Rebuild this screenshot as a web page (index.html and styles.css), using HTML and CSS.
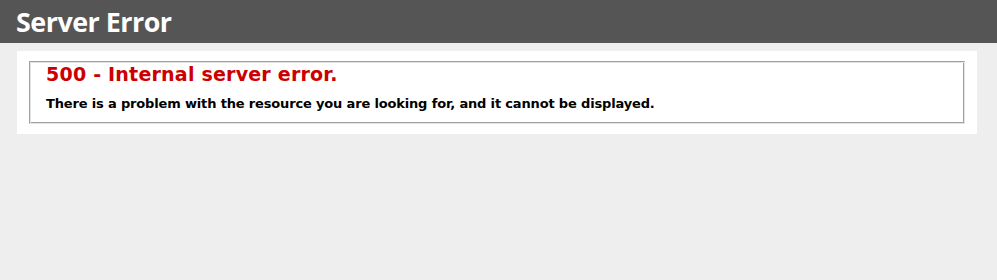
FILE: index.html
```html
<!DOCTYPE html>
<html>
<head>
<meta charset="utf-8">
<title>500 - Internal server error.</title>
<link rel="stylesheet" href="styles.css">
</head>
<body>
<div class="header"><h1>Server Error</h1></div>
<div class="content">
  <div class="content-container">
    <fieldset>
      <h2>500 - Internal server error.</h2>
      <h3>There is a problem with the resource you are looking for, and it cannot be displayed.</h3>
    </fieldset>
  </div>
</div>
</body>
</html>
```

FILE: styles.css
```css
body {
  margin: 0;
  font-size: 11.2px;
  font-family: "DejaVu Sans", Verdana, sans-serif;
  background: #eeeeee;
}
.header {
  padding: 6px 16px;
  background-color: #555555;
  font-family: "Open Sans", sans-serif;
  color: #fff;
}
h1 {
  font-size: 26.88px;
  line-height: 31px;
  letter-spacing: -0.5px;
  margin: 0;
  color: #fff;
  font-weight: 700;
}
.content {
  padding: 0 20px 0 17px;
}
.content-container {
  background: #fff;
  margin-top: 8px;
  padding: 10px;
}
fieldset {
  margin: 0 2px;
  padding: 1px 16px 11px 16px;
  border: 1px solid;
  border-color: #a0a0a0 #e3e3e3 #e3e3e3 #a0a0a0;
  box-shadow: inset 1px 1px #e3e3e3, inset -1px -1px #a0a0a0;
}
h2 {
  font-size: 19.04px;
  line-height: 23px;
  letter-spacing: 0.2px;
  margin: 0;
  color: #cc0000;
}
h3 {
  font-size: 13px;
  line-height: 16px;
  letter-spacing: -0.16px;
  margin: 10px 0 0 0;
  color: #000;
}
```
